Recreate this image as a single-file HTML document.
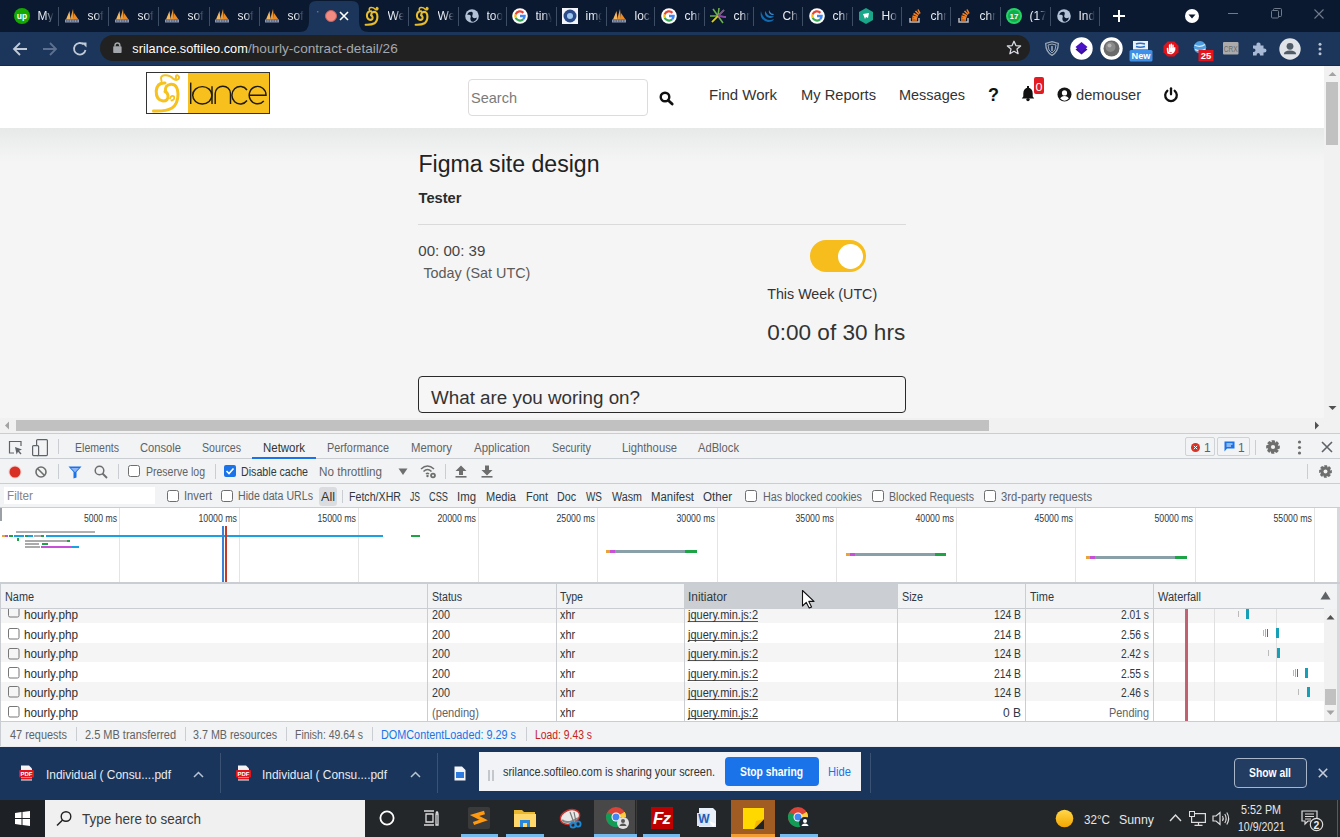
<!DOCTYPE html>
<html><head><meta charset="utf-8"><style>
*{box-sizing:border-box;margin:0;padding:0}
html,body{width:1340px;height:837px;overflow:hidden;background:#fff;font-family:"Liberation Sans",sans-serif}
.a{position:absolute}
.t{position:absolute;white-space:nowrap;line-height:1}
svg{position:absolute;overflow:visible}
</style></head><body>
<div class="a" style="left:0;top:0;width:1340px;height:32px;background:#0a1830"></div>
<div class="a" style="left:0;top:32px;width:1340px;height:34px;background:#1b365a"></div>
<div class="a" style="left:0;top:65px;width:1340px;height:1px;background:#142c4c"></div>
<svg style="left:299px;top:0" width="70" height="32"><path d="M0 32 Q10 32 10 22 L10 8 Q10 1 17 1 L53 1 Q60 1 60 8 L60 22 Q60 32 70 32 Z" fill="#1b365a"/></svg>
<div class="a" style="left:58px;top:7px;width:1px;height:19px;background:#3d4d63"></div>
<div class="a" style="left:108px;top:7px;width:1px;height:19px;background:#3d4d63"></div>
<div class="a" style="left:158px;top:7px;width:1px;height:19px;background:#3d4d63"></div>
<div class="a" style="left:209px;top:7px;width:1px;height:19px;background:#3d4d63"></div>
<div class="a" style="left:259px;top:7px;width:1px;height:19px;background:#3d4d63"></div>
<div class="a" style="left:408px;top:7px;width:1px;height:19px;background:#3d4d63"></div>
<div class="a" style="left:458px;top:7px;width:1px;height:19px;background:#3d4d63"></div>
<div class="a" style="left:506px;top:7px;width:1px;height:19px;background:#3d4d63"></div>
<div class="a" style="left:556px;top:7px;width:1px;height:19px;background:#3d4d63"></div>
<div class="a" style="left:606px;top:7px;width:1px;height:19px;background:#3d4d63"></div>
<div class="a" style="left:654px;top:7px;width:1px;height:19px;background:#3d4d63"></div>
<div class="a" style="left:704px;top:7px;width:1px;height:19px;background:#3d4d63"></div>
<div class="a" style="left:753px;top:7px;width:1px;height:19px;background:#3d4d63"></div>
<div class="a" style="left:802px;top:7px;width:1px;height:19px;background:#3d4d63"></div>
<div class="a" style="left:852px;top:7px;width:1px;height:19px;background:#3d4d63"></div>
<div class="a" style="left:901px;top:7px;width:1px;height:19px;background:#3d4d63"></div>
<div class="a" style="left:950px;top:7px;width:1px;height:19px;background:#3d4d63"></div>
<div class="a" style="left:1000px;top:7px;width:1px;height:19px;background:#3d4d63"></div>
<div class="a" style="left:1050px;top:7px;width:1px;height:19px;background:#3d4d63"></div>
<div class="a" style="left:1099px;top:7px;width:1px;height:19px;background:#3d4d63"></div>
<svg style="left:14px;top:8px" width="16" height="16"><circle cx="8" cy="8" r="8" fill="#14a800"/><text x="8" y="11" font-size="8.5" font-weight="bold" text-anchor="middle" fill="#fff" font-family="Liberation Sans">up</text></svg>
<div class="t" style="left:37.5px;top:10px;font-size:12px;color:#e8ecf2;width:16px;overflow:hidden;-webkit-mask-image:linear-gradient(90deg,#000 45%,transparent 100%)">My</div>
<svg style="left:64px;top:8px" width="16" height="16"><path d="M2 11.5 L5.5 3 L6.5 11.5Z" fill="#f4b860"/><path d="M6 11.5 L9 1 L10 11.5Z" fill="#e99a3a"/><path d="M9.5 11.5 L10 5 L14.5 11.5Z" fill="#f08a20"/><rect x="1" y="11.5" width="14" height="3" fill="#8e97b0"/><path d="M2 13 H14" stroke="#0a1830" stroke-width="0.6" stroke-dasharray="1.5 1"/></svg>
<div class="t" style="left:87.5px;top:10px;font-size:12px;color:#e8ecf2;width:16px;overflow:hidden;-webkit-mask-image:linear-gradient(90deg,#000 45%,transparent 100%)">soft</div>
<svg style="left:114px;top:8px" width="16" height="16"><path d="M2 11.5 L5.5 3 L6.5 11.5Z" fill="#f4b860"/><path d="M6 11.5 L9 1 L10 11.5Z" fill="#e99a3a"/><path d="M9.5 11.5 L10 5 L14.5 11.5Z" fill="#f08a20"/><rect x="1" y="11.5" width="14" height="3" fill="#8e97b0"/><path d="M2 13 H14" stroke="#0a1830" stroke-width="0.6" stroke-dasharray="1.5 1"/></svg>
<div class="t" style="left:137.5px;top:10px;font-size:12px;color:#e8ecf2;width:16px;overflow:hidden;-webkit-mask-image:linear-gradient(90deg,#000 45%,transparent 100%)">soft</div>
<svg style="left:164px;top:8px" width="16" height="16"><path d="M2 11.5 L5.5 3 L6.5 11.5Z" fill="#f4b860"/><path d="M6 11.5 L9 1 L10 11.5Z" fill="#e99a3a"/><path d="M9.5 11.5 L10 5 L14.5 11.5Z" fill="#f08a20"/><rect x="1" y="11.5" width="14" height="3" fill="#8e97b0"/><path d="M2 13 H14" stroke="#0a1830" stroke-width="0.6" stroke-dasharray="1.5 1"/></svg>
<div class="t" style="left:187.5px;top:10px;font-size:12px;color:#e8ecf2;width:16px;overflow:hidden;-webkit-mask-image:linear-gradient(90deg,#000 45%,transparent 100%)">soft</div>
<svg style="left:214px;top:8px" width="16" height="16"><path d="M2 11.5 L5.5 3 L6.5 11.5Z" fill="#f4b860"/><path d="M6 11.5 L9 1 L10 11.5Z" fill="#e99a3a"/><path d="M9.5 11.5 L10 5 L14.5 11.5Z" fill="#f08a20"/><rect x="1" y="11.5" width="14" height="3" fill="#8e97b0"/><path d="M2 13 H14" stroke="#0a1830" stroke-width="0.6" stroke-dasharray="1.5 1"/></svg>
<div class="t" style="left:237.5px;top:10px;font-size:12px;color:#e8ecf2;width:16px;overflow:hidden;-webkit-mask-image:linear-gradient(90deg,#000 45%,transparent 100%)">soft</div>
<svg style="left:264px;top:8px" width="16" height="16"><path d="M2 11.5 L5.5 3 L6.5 11.5Z" fill="#f4b860"/><path d="M6 11.5 L9 1 L10 11.5Z" fill="#e99a3a"/><path d="M9.5 11.5 L10 5 L14.5 11.5Z" fill="#f08a20"/><rect x="1" y="11.5" width="14" height="3" fill="#8e97b0"/><path d="M2 13 H14" stroke="#0a1830" stroke-width="0.6" stroke-dasharray="1.5 1"/></svg>
<div class="t" style="left:287.5px;top:10px;font-size:12px;color:#e8ecf2;width:16px;overflow:hidden;-webkit-mask-image:linear-gradient(90deg,#000 45%,transparent 100%)">soft</div>
<svg style="left:363px;top:6px" width="18" height="20"><g transform="scale(0.48) translate(-2,0)" fill="none" stroke="#e9bc2a" stroke-linecap="round"><path d="M15.5 9 Q13.5 3.5 19 3.2 Q24 3 27 6.5 Q30 9 32.5 7 Q34 4.5 31.5 3.3 Q29.5 3 30 6" stroke-width="3.2"/><path d="M19 11 Q11 10.5 10.2 19 Q10 28 17 29 Q22.5 29 22 23.5 Q21.5 20.5 19 19.5" stroke-width="4.4"/><path d="M19.5 19.5 Q18.5 13 25 12.3 Q31.8 12 32 22 Q32 32 26 36 Q20 39.5 7.5 39" stroke-width="4.4"/></g></svg>
<div class="t" style="left:387.5px;top:10px;font-size:12px;color:#e8ecf2;width:16px;overflow:hidden;-webkit-mask-image:linear-gradient(90deg,#000 45%,transparent 100%)">We</div>
<svg style="left:413px;top:6px" width="18" height="20"><g transform="scale(0.48) translate(-2,0)" fill="none" stroke="#e9bc2a" stroke-linecap="round"><path d="M15.5 9 Q13.5 3.5 19 3.2 Q24 3 27 6.5 Q30 9 32.5 7 Q34 4.5 31.5 3.3 Q29.5 3 30 6" stroke-width="3.2"/><path d="M19 11 Q11 10.5 10.2 19 Q10 28 17 29 Q22.5 29 22 23.5 Q21.5 20.5 19 19.5" stroke-width="4.4"/><path d="M19.5 19.5 Q18.5 13 25 12.3 Q31.8 12 32 22 Q32 32 26 36 Q20 39.5 7.5 39" stroke-width="4.4"/></g></svg>
<div class="t" style="left:437.5px;top:10px;font-size:12px;color:#e8ecf2;width:16px;overflow:hidden;-webkit-mask-image:linear-gradient(90deg,#000 45%,transparent 100%)">We</div>
<svg style="left:463.5px;top:8px" width="16" height="16"><circle cx="8" cy="8" r="6.8" fill="#b4c2d6"/><path d="M3.2 6.8 Q4.2 3.6 7.6 3.8 Q9.6 4.4 8.6 6.4 Q7.6 8.2 8.8 9.6 Q10.6 10.8 13 9.4 Q12.6 12.4 10 13.6 Q7.6 14.4 6.6 12.2 Q6 10.4 6.8 8.8 Q7.2 7.2 5.4 6.8 Q4.2 6.6 3.2 6.8Z" fill="#0a1830"/></svg>
<div class="t" style="left:486.5px;top:10px;font-size:12px;color:#e8ecf2;width:16px;overflow:hidden;-webkit-mask-image:linear-gradient(90deg,#000 45%,transparent 100%)">too</div>
<svg style="left:512px;top:8px" width="16" height="16"><circle cx="8" cy="8" r="7.8" fill="#fff"/><g fill="none" stroke-width="2.3"><path d="M8 8 H12.6 A4.6 4.6 0 0 1 11.25 11.25" stroke="#4285f4"/><path d="M11.25 11.25 A4.6 4.6 0 0 1 3.68 9.57" stroke="#34a853"/><path d="M3.68 9.57 A4.6 4.6 0 0 1 3.68 6.43" stroke="#fbbc05"/><path d="M3.68 6.43 A4.6 4.6 0 0 1 11.4 4.9" stroke="#ea4335"/></g></svg>
<div class="t" style="left:535.5px;top:10px;font-size:12px;color:#e8ecf2;width:16px;overflow:hidden;-webkit-mask-image:linear-gradient(90deg,#000 45%,transparent 100%)">tiny</div>
<svg style="left:562px;top:8px" width="16" height="16"><rect width="16" height="16" fill="#f2f4f8"/><circle cx="8" cy="8" r="6.5" fill="#2a4a8a"/><circle cx="8" cy="8" r="3" fill="#9ec7f0"/></svg>
<div class="t" style="left:585.5px;top:10px;font-size:12px;color:#e8ecf2;width:16px;overflow:hidden;-webkit-mask-image:linear-gradient(90deg,#000 45%,transparent 100%)">img</div>
<svg style="left:611px;top:8px" width="16" height="16"><path d="M2 11.5 L5.5 3 L6.5 11.5Z" fill="#f4b860"/><path d="M6 11.5 L9 1 L10 11.5Z" fill="#e99a3a"/><path d="M9.5 11.5 L10 5 L14.5 11.5Z" fill="#f08a20"/><rect x="1" y="11.5" width="14" height="3" fill="#8e97b0"/><path d="M2 13 H14" stroke="#0a1830" stroke-width="0.6" stroke-dasharray="1.5 1"/></svg>
<div class="t" style="left:634.5px;top:10px;font-size:12px;color:#e8ecf2;width:16px;overflow:hidden;-webkit-mask-image:linear-gradient(90deg,#000 45%,transparent 100%)">loca</div>
<svg style="left:661px;top:8px" width="16" height="16"><circle cx="8" cy="8" r="7.8" fill="#fff"/><g fill="none" stroke-width="2.3"><path d="M8 8 H12.6 A4.6 4.6 0 0 1 11.25 11.25" stroke="#4285f4"/><path d="M11.25 11.25 A4.6 4.6 0 0 1 3.68 9.57" stroke="#34a853"/><path d="M3.68 9.57 A4.6 4.6 0 0 1 3.68 6.43" stroke="#fbbc05"/><path d="M3.68 6.43 A4.6 4.6 0 0 1 11.4 4.9" stroke="#ea4335"/></g></svg>
<div class="t" style="left:684.5px;top:10px;font-size:12px;color:#e8ecf2;width:16px;overflow:hidden;-webkit-mask-image:linear-gradient(90deg,#000 45%,transparent 100%)">chr</div>
<svg style="left:710px;top:8px" width="16" height="16"><path d="M8 8 L3 1 M8 8 L9 0 M8 8 L14 2 M8 8 L16 9 M8 8 L13 15 M8 8 L2 14 M8 8 L0 8" stroke-width="1.6" stroke="#6ab04c"/><path d="M8 8 L14 2 M8 8 L16 9" stroke="#8e44ad" stroke-width="1.6"/><path d="M8 8 L2 14" stroke="#f1c40f" stroke-width="1.6"/></svg>
<div class="t" style="left:733.5px;top:10px;font-size:12px;color:#e8ecf2;width:16px;overflow:hidden;-webkit-mask-image:linear-gradient(90deg,#000 45%,transparent 100%)">chr</div>
<svg style="left:759px;top:8px" width="16" height="16"><path d="M2 3 Q0 12 9 14 Q14 14 15 11 Q8 14 4 8 Q2 5 2 3Z" fill="#1169ae"/><path d="M6 3 Q5 9 11 10 Q14 10 15 8 Q10 9 8 6 Q7 4 6 3Z" fill="#1b75bb"/><path d="M10 2 Q9 6 13 7 Q15 7 15 6 Q12 6 11 4Z" fill="#3a8fd1"/></svg>
<div class="t" style="left:782.5px;top:10px;font-size:12px;color:#e8ecf2;width:16px;overflow:hidden;-webkit-mask-image:linear-gradient(90deg,#000 45%,transparent 100%)">Cha</div>
<svg style="left:809px;top:8px" width="16" height="16"><circle cx="8" cy="8" r="7.8" fill="#fff"/><g fill="none" stroke-width="2.3"><path d="M8 8 H12.6 A4.6 4.6 0 0 1 11.25 11.25" stroke="#4285f4"/><path d="M11.25 11.25 A4.6 4.6 0 0 1 3.68 9.57" stroke="#34a853"/><path d="M3.68 9.57 A4.6 4.6 0 0 1 3.68 6.43" stroke="#fbbc05"/><path d="M3.68 6.43 A4.6 4.6 0 0 1 11.4 4.9" stroke="#ea4335"/></g></svg>
<div class="t" style="left:832.5px;top:10px;font-size:12px;color:#e8ecf2;width:16px;overflow:hidden;-webkit-mask-image:linear-gradient(90deg,#000 45%,transparent 100%)">chr</div>
<svg style="left:858px;top:8px" width="16" height="16"><path d="M8 0 L15 4 L15 12 L8 16 L1 12 L1 4Z" fill="#1aa688"/><path d="M5 6 L11 5 L10 10 L8 9 L7 11Z" fill="#fff"/></svg>
<div class="t" style="left:881.5px;top:10px;font-size:12px;color:#e8ecf2;width:16px;overflow:hidden;-webkit-mask-image:linear-gradient(90deg,#000 45%,transparent 100%)">Ho</div>
<svg style="left:907px;top:8px" width="16" height="16"><path d="M3 10 V14 H12 V10" stroke="#bcbbbb" stroke-width="1.5" fill="none"/><path d="M5 12 H10 M5 10 L10 10.5 M5.5 8 L10.5 9.5 M6.5 5.5 L11 8 M8.5 3 L12 6.5 M11 1.5 L13 5.5" stroke="#f48024" stroke-width="1.6"/></svg>
<div class="t" style="left:930.5px;top:10px;font-size:12px;color:#e8ecf2;width:16px;overflow:hidden;-webkit-mask-image:linear-gradient(90deg,#000 45%,transparent 100%)">chr</div>
<svg style="left:956px;top:8px" width="16" height="16"><path d="M3 10 V14 H12 V10" stroke="#bcbbbb" stroke-width="1.5" fill="none"/><path d="M5 12 H10 M5 10 L10 10.5 M5.5 8 L10.5 9.5 M6.5 5.5 L11 8 M8.5 3 L12 6.5 M11 1.5 L13 5.5" stroke="#f48024" stroke-width="1.6"/></svg>
<div class="t" style="left:979.5px;top:10px;font-size:12px;color:#e8ecf2;width:16px;overflow:hidden;-webkit-mask-image:linear-gradient(90deg,#000 45%,transparent 100%)">chr</div>
<svg style="left:1006px;top:8px" width="16" height="16"><circle cx="8" cy="8" r="8" fill="#25d366"/><circle cx="8" cy="8" r="6" fill="#0fae4a"/><text x="8" y="11" font-size="8" font-weight="bold" text-anchor="middle" fill="#fff" font-family="Liberation Sans">17</text></svg>
<div class="t" style="left:1029.5px;top:10px;font-size:12px;color:#e8ecf2;width:16px;overflow:hidden;-webkit-mask-image:linear-gradient(90deg,#000 45%,transparent 100%)">(17)</div>
<svg style="left:1055.5px;top:8px" width="16" height="16"><circle cx="8" cy="8" r="6.8" fill="#b4c2d6"/><path d="M3.2 6.8 Q4.2 3.6 7.6 3.8 Q9.6 4.4 8.6 6.4 Q7.6 8.2 8.8 9.6 Q10.6 10.8 13 9.4 Q12.6 12.4 10 13.6 Q7.6 14.4 6.6 12.2 Q6 10.4 6.8 8.8 Q7.2 7.2 5.4 6.8 Q4.2 6.6 3.2 6.8Z" fill="#0a1830"/></svg>
<div class="t" style="left:1078.5px;top:10px;font-size:12px;color:#e8ecf2;width:16px;overflow:hidden;-webkit-mask-image:linear-gradient(90deg,#000 45%,transparent 100%)">Ind</div>
<div class="t" style="left:317px;top:10px;font-size:8px;color:#8ab4f8">'</div>
<svg style="left:324px;top:9px" width="14" height="14"><circle cx="7" cy="7" r="5.5" fill="#f28b82" stroke="#c5645e" stroke-width="1"/></svg>
<svg style="left:339px;top:11px" width="10" height="10"><path d="M1 1 L9 9 M9 1 L1 9" stroke="#fff" stroke-width="1.6"/></svg>
<svg style="left:1112px;top:9px" width="14" height="14"><path d="M7 1 V13 M1 7 H13" stroke="#fff" stroke-width="2"/></svg>
<svg style="left:1184px;top:8px" width="16" height="16"><circle cx="8" cy="8" r="7" fill="#fff"/><path d="M4.5 6.5 L11.5 6.5 L8 10.5Z" fill="#0a1830"/></svg>
<div class="a" style="left:1228px;top:13px;width:10px;height:1px;background:#6f7a8a"></div>
<svg style="left:1271px;top:8px" width="11" height="11"><rect x="0.5" y="2.5" width="7" height="7.5" rx="1" fill="none" stroke="#6f7a8a"/><path d="M2.5 2.5 V1.5 Q2.5 0.5 3.5 0.5 H9.5 Q10.5 0.5 10.5 1.5 V7.5 Q10.5 8.5 9.5 8.5 H7.5" fill="none" stroke="#6f7a8a"/></svg>
<svg style="left:1313.5px;top:8.5px" width="10" height="10"><path d="M0.5 0.5 L9.5 9.5 M9.5 0.5 L0.5 9.5" stroke="#6f7a8a" stroke-width="1.1"/></svg>
<svg style="left:12px;top:41px" width="16" height="16"><path d="M15 8 H2 M8 2 L2 8 L8 14" stroke="#c0cad8" stroke-width="1.8" fill="none"/></svg>
<svg style="left:42px;top:41px" width="16" height="16"><path d="M1 8 H14 M8 2 L14 8 L8 14" stroke="#5d7090" stroke-width="1.8" fill="none"/></svg>
<svg style="left:72px;top:41px" width="16" height="16"><path d="M13.5 9 A5.8 5.8 0 1 1 11.6 3.4" stroke="#c0cad8" stroke-width="1.8" fill="none"/><path d="M9.5 1.5 L14.5 1.5 L14.5 6.5Z" fill="#c0cad8"/></svg>
<div class="a" style="left:100px;top:35px;width:930px;height:26px;border-radius:13px;background:#212121"></div>
<svg style="left:113px;top:42px" width="9" height="12"><rect x="0.2" y="4.2" width="8.4" height="6.8" rx="0.8" fill="#a3a6aa"/><path d="M2 4.5 V3.3 A2.4 2.4 0 0 1 6.8 3.3 V4.5" stroke="#a3a6aa" stroke-width="1.5" fill="none"/></svg>
<svg style="left:1006px;top:40px" width="16" height="16"><path d="M8 1.3 L9.9 5.6 L14.6 6 L11 9.1 L12.1 13.7 L8 11.3 L3.9 13.7 L5 9.1 L1.4 6 L6.1 5.6Z" stroke="#d8dce2" stroke-width="1.3" fill="none" stroke-linejoin="round"/></svg>
<svg style="left:1045px;top:41px" width="14" height="15"><path d="M7 0.7 L13.3 2.5 Q13.3 11 7 14.3 Q0.7 11 0.7 2.5Z" fill="none" stroke="#9aa7b8" stroke-width="1.3"/><path d="M7 3 L11 4 Q11 10 7 12 Q3 10 3 4Z" fill="none" stroke="#9aa7b8" stroke-width="1"/><path d="M6.2 5 H7.8 V10 H6.2Z" fill="#9aa7b8"/></svg>
<svg style="left:1070px;top:37px" width="23" height="23"><circle cx="11.5" cy="11.5" r="11.2" fill="#fff"/><path d="M11.5 5 L17.5 10 L11.5 15 L5.5 10Z" fill="#4a12c8"/><path d="M5.5 12.5 L11.5 17.5 L17.5 12.5 L15.5 11 L11.5 14.5 L7.5 11Z" fill="#3a0ea0"/></svg>
<svg style="left:1100px;top:37px" width="23" height="23"><circle cx="11.5" cy="11.5" r="11.2" fill="#fff"/><circle cx="11.5" cy="11.5" r="8" fill="#6a6a6a"/><circle cx="10.5" cy="10" r="5" fill="#8a8a8a"/><circle cx="9.5" cy="8.5" r="2" fill="#b5b5b5"/></svg>
<svg style="left:1129px;top:41px" width="24" height="21"><rect x="4" y="0" width="15" height="8.5" fill="#e9f1fb"/><path d="M7 3 Q11 1.5 16 3 M7 5.5 Q11 7 16 5.5" stroke="#2a6fc9" stroke-width="1.6" fill="none"/><rect x="0.5" y="9" width="23" height="11.5" rx="1.5" fill="#3f8fe6"/><text x="12" y="18.3" font-size="9.5" font-weight="bold" text-anchor="middle" fill="#fff" font-family="Liberation Sans" textLength="19" lengthAdjust="spacingAndGlyphs">New</text></svg>
<svg style="left:1163px;top:40.5px" width="16" height="16"><path d="M4.7 0.5 H11.3 L15.5 4.7 V11.3 L11.3 15.5 H4.7 L0.5 11.3 V4.7Z" fill="#e0131b"/><path d="M5 12 Q4.5 9 4.5 7.5 M6.6 10 V4 M8.3 10 V3.3 M10 10 V4.3 M11.6 9 V6.3 Q11.8 11.5 8.3 12.5 Q6 12.5 5 11" stroke="#fff" stroke-width="1.5" fill="none" stroke-linecap="round"/><path d="M6 7 H11 V11 H6Z" fill="#fff"/></svg>
<svg style="left:1193px;top:41px" width="22" height="21"><circle cx="7" cy="6.3" r="6.2" fill="#4e9ee0"/><path d="M1.5 4 Q7 7 12 3.5 M2 8.5 Q7 11 12.5 8" stroke="#d9ecfb" stroke-width="1.3" fill="none"/><rect x="5.5" y="9" width="15" height="11.3" fill="#e3141b"/><text x="13" y="18.3" font-size="9.5" font-weight="bold" text-anchor="middle" fill="#fff" font-family="Liberation Sans">25</text></svg>
<svg style="left:1222.5px;top:42px" width="16" height="13"><rect x="0" y="0" width="15.5" height="12.5" rx="1" fill="#ababab"/><text x="7.75" y="10" font-size="8.3" text-anchor="middle" fill="#6d6d6d" font-family="Liberation Sans" textLength="14" lengthAdjust="spacingAndGlyphs">CRX</text></svg>
<svg style="left:1252px;top:41.5px" width="15" height="14"><path d="M1 3.5 H4.5 Q4 0.5 6.5 0.5 Q9 0.5 8.5 3.5 H11.5 V6.5 Q14.5 6 14.5 8.5 Q14.5 11 11.5 10.5 V13.5 H8 Q8.3 11 6.3 11 Q4.3 11 4.6 13.5 H1 V10 Q3.5 10.3 3.5 8.3 Q3.5 6.3 1 6.6Z" fill="#a8bad6"/></svg>
<svg style="left:1279px;top:37.5px" width="22" height="22"><circle cx="11" cy="11" r="10.7" fill="#e0e3e7"/><circle cx="11" cy="8.3" r="3.4" fill="#505b68"/><path d="M4.8 16.2 Q5.2 12.6 11 12.6 Q16.8 12.6 17.2 16.2 Z" fill="#505b68"/></svg>
<svg style="left:1318px;top:41.5px" width="4" height="14"><circle cx="2" cy="2.2" r="1.5" fill="#b8c3d3"/><circle cx="2" cy="7" r="1.5" fill="#b8c3d3"/><circle cx="2" cy="11.8" r="1.5" fill="#b8c3d3"/></svg>
<div class="a" style="left:0;top:66px;width:1324px;height:62px;background:#fff"></div>
<div class="a" style="left:0;top:128px;width:1324px;height:290px;background:#f5f5f5"></div>
<div class="a" style="left:0;top:128px;width:1324px;height:34px;background:linear-gradient(#e7e9e9,#f5f5f5)"></div>
<div class="a" style="left:146px;top:72px;width:124px;height:42px;border:1px solid #333;background:#f7c01c"></div>
<div class="a" style="left:147px;top:73px;width:41px;height:40px;background:#fff"></div>
<svg style="left:146px;top:72px" width="42" height="42"><g fill="none" stroke="#f5c21f" stroke-linecap="round"><path d="M15.5 9 Q13.5 3.5 19 3.2 Q24 3 27 6.5 Q30 9 32.5 7 Q34 4.5 31.5 3.3 Q29.5 3 30 6" stroke-width="2"/><path d="M19 11 Q11 10.5 10.2 19 Q10 28 17 29 Q22.5 29 22 23.5 Q21.5 20.5 19 19.5" stroke-width="3"/><path d="M19.5 19.5 Q18.5 13 25 12.3 Q31.8 12 32 22 Q32 32 26 36 Q20 39.5 7.5 39" stroke-width="3"/><path d="M24 26.5 Q25.5 22.5 28 24.5 Q29 28 25.5 28.5" stroke-width="1.8"/></g></svg>
<svg style="left:146px;top:72px" width="124" height="42"><g fill="none" stroke="#1e1a10" stroke-width="1.45"><path d="M44.7 10.6 V32"/><ellipse cx="56.3" cy="23.3" rx="9.6" ry="8.7"/><path d="M66 14.3 V32"/><path d="M69.2 32 V21.5 A7.6 7.3 0 0 1 84.5 21.5 V32"/><path d="M101 18 A8.4 8.7 0 1 0 101 28.5"/><path d="M103.4 23.3 H120 A8.4 8.7 0 1 0 117.8 29"/></g></svg>
<div class="a" style="left:468px;top:79px;width:180px;height:37px;border:1px solid #dcdcdc;border-radius:4px;background:#fff"></div>
<svg style="left:659px;top:91px" width="15" height="14"><circle cx="6" cy="6" r="4.3" stroke="#111" stroke-width="2.4" fill="none"/><path d="M9.4 9.4 L13.2 13" stroke="#111" stroke-width="2.8" stroke-linecap="round"/></svg>
<svg style="left:1021px;top:86px" width="14" height="16"><path d="M7 1.5 Q2.3 2.3 2.3 7.5 V10.5 L0.8 12.6 H13.2 L11.7 10.5 V7.5 Q11.7 2.3 7 1.5Z" fill="#111"/><circle cx="7" cy="13.6" r="1.7" fill="#111"/><rect x="6" y="0" width="2" height="3" fill="#111"/></svg>
<div class="a" style="left:1034px;top:77px;width:10px;height:17px;background:#e31b23;border-radius:2px"></div>
<svg style="left:1057px;top:87px" width="15" height="15"><circle cx="7.5" cy="7.5" r="7" fill="#151515"/><circle cx="7.5" cy="5.9" r="2.6" fill="#fff"/><path d="M3.2 11.6 Q4.3 8.9 7.5 8.9 Q10.7 8.9 11.8 11.6 Q10 13.7 7.5 13.7 Q5 13.7 3.2 11.6Z" fill="#fff"/></svg>
<svg style="left:1163px;top:87px" width="16" height="15"><path d="M4.3 3.8 A5.8 5.8 0 1 0 11.7 3.8" stroke="#111" stroke-width="2.3" fill="none" stroke-linecap="round"/><path d="M8 1.3 V7.3" stroke="#111" stroke-width="2.3" stroke-linecap="round"/></svg>
<div class="a" style="left:418px;top:224px;width:488px;height:1px;background:#dadada"></div>
<div class="a" style="left:810px;top:240px;width:56px;height:32px;border-radius:16px;background:#f6bd1c"></div>
<div class="a" style="left:838px;top:243.5px;width:25px;height:25px;border-radius:13px;background:#fff"></div>
<div class="a" style="left:418px;top:376px;width:488px;height:37px;border:1.5px solid #2a2a2a;border-radius:4px;background:#f6f6f6"></div>
<div class="a" style="left:1324px;top:66px;width:16px;height:352px;background:#f1f1f1"></div>
<div class="a" style="left:1326px;top:82px;width:12px;height:63px;background:#c1c1c1"></div>
<svg style="left:1327px;top:70px" width="11" height="8"><path d="M1.5 6 L5.5 2 L9.5 6Z" fill="#a3a3a3"/></svg>
<svg style="left:1327px;top:404px" width="11" height="8"><path d="M1.5 2 L5.5 6 L9.5 2Z" fill="#505050"/></svg>
<div class="a" style="left:0;top:418px;width:1340px;height:15px;background:#f1f1f1"></div>
<div class="a" style="left:16px;top:420px;width:973px;height:11px;background:#c1c1c1"></div>
<svg style="left:3px;top:420px" width="8" height="11"><path d="M6 1.5 L2 5.5 L6 9.5Z" fill="#a3a3a3"/></svg>
<svg style="left:1313px;top:420px" width="8" height="11"><path d="M2 1.5 L6 5.5 L2 9.5Z" fill="#505050"/></svg>
<div class="a" style="left:0;top:433px;width:1340px;height:313px;background:#f1f3f4"></div>
<div class="a" style="left:0;top:433px;width:1340px;height:1px;background:#cacdd1"></div>
<div class="a" style="left:0;top:458px;width:1340px;height:1px;background:#cacdd1"></div>
<div class="a" style="left:0;top:483px;width:1340px;height:1px;background:#cacdd1"></div>
<div class="a" style="left:0;top:507px;width:1340px;height:1px;background:#cacdd1"></div>
<svg style="left:8px;top:440px" width="16" height="16"><path d="M6 13 H1.5 V1.5 H13 V6" fill="none" stroke="#5f6368" stroke-width="1.2"/><path d="M7 7 L14 9.5 L11 10.8 L13.5 13.5 L12.5 14.5 L10 11.8 L8.6 14.6Z" fill="#5f6368"/></svg>
<svg style="left:32px;top:439px" width="16" height="18"><rect x="4.6" y="0.6" width="10.8" height="16" rx="1" fill="none" stroke="#5f6368" stroke-width="1.2"/><rect x="0.6" y="6.6" width="6" height="10" rx="1" fill="#f1f3f4" stroke="#5f6368" stroke-width="1.2"/></svg>
<div class="a" style="left:58px;top:439px;width:1px;height:15px;background:#cacdd1"></div>
<div class="a" style="left:252px;top:457px;width:64px;height:2px;background:#1a73e8"></div>
<div class="a" style="left:1185px;top:437px;width:30px;height:19px;border:1px solid #cfd2d6;border-radius:2px"></div>
<svg style="left:1191px;top:443px" width="9" height="9"><circle cx="4.5" cy="4.5" r="4.5" fill="#d93025"/><path d="M2.8 2.8 L6.2 6.2 M6.2 2.8 L2.8 6.2" stroke="#fff" stroke-width="1"/></svg>
<div class="a" style="left:1217px;top:437px;width:33px;height:19px;border:1px solid #cfd2d6;border-radius:2px"></div>
<svg style="left:1224px;top:441px" width="11" height="11"><path d="M0.5 0.5 H10.5 V7.5 H3 L0.5 10.5Z" fill="#1a73e8"/><path d="M2.5 3 H8.5 M2.5 5 H7" stroke="#fff" stroke-width="1"/></svg>
<div class="a" style="left:1255px;top:440px;width:1px;height:15px;background:#cacdd1"></div>
<svg style="left:1265px;top:439px" width="16" height="16"><path d="M14.83 6.47 L14.83 9.53 L12.42 10.42 L12.27 10.68 L13.91 11.75 L11.75 13.91 L9.42 12.84 L9.13 12.91 L9.53 14.83 L6.47 14.83 L5.58 12.42 L5.32 12.27 L4.25 13.91 L2.09 11.75 L3.16 9.42 L3.09 9.13 L1.17 9.53 L1.17 6.47 L3.58 5.58 L3.73 5.32 L2.09 4.25 L4.25 2.09 L6.58 3.16 L6.87 3.09 L6.47 1.17 L9.53 1.17 L10.42 3.58 L10.68 3.73 L11.75 2.09 L13.91 4.25 L12.84 6.58 L12.91 6.87Z" fill="#6e6e6e"/><circle cx="8" cy="8" r="2.1" fill="#f1f3f4"/></svg>
<svg style="left:1297px;top:440px" width="5" height="15"><circle cx="2.5" cy="2" r="1.6" fill="#6e6e6e"/><circle cx="2.5" cy="7.5" r="1.6" fill="#6e6e6e"/><circle cx="2.5" cy="13" r="1.6" fill="#6e6e6e"/></svg>
<svg style="left:1321px;top:441px" width="12" height="12"><path d="M1 1 L11 11 M11 1 L1 11" stroke="#5f6368" stroke-width="1.6"/></svg>
<svg style="left:8px;top:465px" width="14" height="14"><circle cx="7" cy="7" r="6.5" fill="#f5b5b0" opacity="0.6"/><circle cx="7" cy="7" r="5.5" fill="#d93025"/></svg>
<svg style="left:35px;top:466px" width="12" height="12"><circle cx="6" cy="6" r="5" fill="none" stroke="#6e6e6e" stroke-width="1.6"/><path d="M2.5 2.5 L9.5 9.5" stroke="#6e6e6e" stroke-width="1.6"/></svg>
<div class="a" style="left:58px;top:464px;width:1px;height:15px;background:#cacdd1"></div>
<svg style="left:68px;top:466px" width="14" height="13"><path d="M0.5 0.5 H13.5 L8.5 6 V11.5 L5.5 12.5 V6Z" fill="#1a73e8"/><path d="M3 2 H11 L7 6.2Z" fill="#8ab4f8"/></svg>
<svg style="left:94px;top:465px" width="14" height="14"><circle cx="5.5" cy="5.5" r="4.3" fill="none" stroke="#6e6e6e" stroke-width="1.5"/><path d="M8.5 8.5 L13 13" stroke="#6e6e6e" stroke-width="1.8"/></svg>
<div class="a" style="left:118px;top:464px;width:1px;height:15px;background:#cacdd1"></div>
<svg style="left:128px;top:465px" width="12" height="12"><rect x="0.5" y="0.5" width="11" height="11" rx="2" fill="#fff" stroke="#6e6e6e" stroke-width="1"/></svg>
<div class="a" style="left:215px;top:464px;width:1px;height:15px;background:#cacdd1"></div>
<svg style="left:224px;top:465px" width="12" height="12"><rect x="0" y="0" width="12" height="12" rx="2" fill="#1a73e8"/><path d="M2.5 6 L5 8.5 L9.5 3.5" stroke="#fff" stroke-width="1.6" fill="none"/></svg>
<svg style="left:398px;top:468px" width="10" height="8"><path d="M0.5 0.5 H9.5 L5 7Z" fill="#6e6e6e"/></svg>
<svg style="left:420px;top:464px" width="17" height="15"><path d="M1 5 Q7.5 -1 14 5 M3.5 7.5 Q7.5 3.5 11.5 7.5 M6 10 Q7.5 8.5 9 10" stroke="#6e6e6e" stroke-width="1.5" fill="none"/><circle cx="7.5" cy="12" r="1.2" fill="#6e6e6e"/><circle cx="13" cy="11.5" r="2.8" fill="#6e6e6e"/><circle cx="13" cy="11.5" r="1" fill="#f1f3f4"/></svg>
<div class="a" style="left:445px;top:464px;width:1px;height:15px;background:#cacdd1"></div>
<svg style="left:455px;top:465px" width="12" height="13"><path d="M6 0.5 L11.5 6 H8 V10 H4 V6 H0.5Z" fill="#6e6e6e"/><rect x="0.5" y="11" width="11" height="1.6" fill="#6e6e6e"/></svg>
<svg style="left:481px;top:465px" width="12" height="13"><path d="M6 10.5 L11.5 5 H8 V0.5 H4 V5 H0.5Z" fill="#6e6e6e"/><rect x="0.5" y="11" width="11" height="1.6" fill="#6e6e6e"/></svg>
<div class="a" style="left:1307px;top:464px;width:1px;height:15px;background:#cacdd1"></div>
<svg style="left:1317.5px;top:463.5px" width="15.0" height="15.0"><path d="M13.84 6.08 L13.84 8.92 L11.61 9.74 L11.47 9.99 L12.99 10.98 L10.98 12.99 L8.82 11.99 L8.55 12.06 L8.92 13.84 L6.08 13.84 L5.26 11.61 L5.01 11.47 L4.02 12.99 L2.01 10.98 L3.01 8.82 L2.94 8.55 L1.16 8.92 L1.16 6.08 L3.39 5.26 L3.53 5.01 L2.01 4.02 L4.02 2.01 L6.18 3.01 L6.45 2.94 L6.08 1.16 L8.92 1.16 L9.74 3.39 L9.99 3.53 L10.98 2.01 L12.99 4.02 L11.99 6.18 L12.06 6.45Z" fill="#6e6e6e"/><circle cx="7.5" cy="7.5" r="1.95" fill="#f1f3f4"/></svg>
<div class="a" style="left:4px;top:487px;width:151px;height:17px;background:#fff"></div>
<svg style="left:167px;top:490px" width="12" height="12"><rect x="0.5" y="0.5" width="11" height="11" rx="2" fill="#fff" stroke="#6e6e6e" stroke-width="1"/></svg>
<svg style="left:221px;top:490px" width="12" height="12"><rect x="0.5" y="0.5" width="11" height="11" rx="2" fill="#fff" stroke="#6e6e6e" stroke-width="1"/></svg>
<div class="a" style="left:319px;top:487px;width:18px;height:19px;background:#dadce0;border-radius:3px"></div>
<div class="a" style="left:342px;top:490px;width:1px;height:13px;background:#cacdd1"></div>
<svg style="left:745px;top:490px" width="12" height="12"><rect x="0.5" y="0.5" width="11" height="11" rx="2" fill="#fff" stroke="#6e6e6e" stroke-width="1"/></svg>
<svg style="left:872px;top:490px" width="12" height="12"><rect x="0.5" y="0.5" width="11" height="11" rx="2" fill="#fff" stroke="#6e6e6e" stroke-width="1"/></svg>
<svg style="left:984px;top:490px" width="12" height="12"><rect x="0.5" y="0.5" width="11" height="11" rx="2" fill="#fff" stroke="#6e6e6e" stroke-width="1"/></svg>
<div class="a" style="left:0;top:508px;width:1337px;height:75px;background:#fff"></div>
<div class="a" style="left:0;top:508px;width:2px;height:13px;background:#9aa0a6"></div>
<div class="a" style="left:119px;top:508px;width:1px;height:75px;background:#e4e4e4"></div>
<div class="a" style="left:239px;top:508px;width:1px;height:75px;background:#e4e4e4"></div>
<div class="a" style="left:358px;top:508px;width:1px;height:75px;background:#e4e4e4"></div>
<div class="a" style="left:478px;top:508px;width:1px;height:75px;background:#e4e4e4"></div>
<div class="a" style="left:597px;top:508px;width:1px;height:75px;background:#e4e4e4"></div>
<div class="a" style="left:717px;top:508px;width:1px;height:75px;background:#e4e4e4"></div>
<div class="a" style="left:836px;top:508px;width:1px;height:75px;background:#e4e4e4"></div>
<div class="a" style="left:956px;top:508px;width:1px;height:75px;background:#e4e4e4"></div>
<div class="a" style="left:1075px;top:508px;width:1px;height:75px;background:#e4e4e4"></div>
<div class="a" style="left:1195px;top:508px;width:1px;height:75px;background:#e4e4e4"></div>
<div class="a" style="left:1314px;top:508px;width:1px;height:75px;background:#e4e4e4"></div>
<div class="a" style="left:1337px;top:508px;width:3px;height:75px;background:#d6d8db"></div>
<div class="a" style="left:2px;top:534.5px;width:3px;height:2.5px;background:#e8a33d"></div>
<div class="a" style="left:5px;top:534.5px;width:3px;height:2.5px;background:#c84fd8"></div>
<div class="a" style="left:9px;top:534.5px;width:4px;height:2.5px;background:#1ea446"></div>
<div class="a" style="left:14px;top:534.5px;width:10px;height:2.5px;background:#1ba1e2"></div>
<div class="a" style="left:25px;top:534.5px;width:3px;height:2.5px;background:#1ea446"></div>
<div class="a" style="left:28px;top:534.5px;width:5px;height:2.5px;background:#1ba1e2"></div>
<div class="a" style="left:34px;top:534.5px;width:7px;height:2.5px;background:#aaaaaa"></div>
<div class="a" style="left:41px;top:534.5px;width:3px;height:2.5px;background:#1ea446"></div>
<div class="a" style="left:46px;top:534.5px;width:337px;height:2.5px;background:#1ba1e2"></div>
<div class="a" style="left:411px;top:534.5px;width:9px;height:2.5px;background:#1ea446"></div>
<div class="a" style="left:16px;top:531px;width:79px;height:1.5px;background:#b0b0b0"></div>
<div class="a" style="left:17px;top:538px;width:2px;height:3px;background:#1ea446"></div>
<div class="a" style="left:25px;top:540px;width:42px;height:2px;background:#aaaaaa"></div>
<div class="a" style="left:67px;top:540px;width:3px;height:2px;background:#1ea446"></div>
<div class="a" style="left:25px;top:543px;width:14px;height:2px;background:#aaaaaa"></div>
<div class="a" style="left:42px;top:543px;width:6px;height:2px;background:#1ea446"></div>
<div class="a" style="left:25px;top:546px;width:15px;height:2px;background:#aaaaaa"></div>
<div class="a" style="left:41px;top:546px;width:31px;height:2px;background:#c84fd8"></div>
<div class="a" style="left:72px;top:546px;width:7px;height:2px;background:#1ba1e2"></div>
<div class="a" style="left:606px;top:550px;width:4px;height:3px;background:#e8a33d"></div>
<div class="a" style="left:610px;top:550px;width:5px;height:3px;background:#c84fd8"></div>
<div class="a" style="left:615px;top:550px;width:70px;height:3px;background:#8aa0a8"></div>
<div class="a" style="left:685px;top:550px;width:12px;height:3px;background:#1ea446"></div>
<div class="a" style="left:846px;top:553px;width:4px;height:3px;background:#e8a33d"></div>
<div class="a" style="left:850px;top:553px;width:5px;height:3px;background:#c84fd8"></div>
<div class="a" style="left:855px;top:553px;width:80px;height:3px;background:#8aa0a8"></div>
<div class="a" style="left:935px;top:553px;width:11px;height:3px;background:#1ea446"></div>
<div class="a" style="left:1086px;top:556px;width:4px;height:3px;background:#e8a33d"></div>
<div class="a" style="left:1090px;top:556px;width:5px;height:3px;background:#c84fd8"></div>
<div class="a" style="left:1095px;top:556px;width:80px;height:3px;background:#8aa0a8"></div>
<div class="a" style="left:1175px;top:556px;width:12px;height:3px;background:#1ea446"></div>
<div class="a" style="left:222px;top:526px;width:1.5px;height:57px;background:#3b82d6"></div>
<div class="a" style="left:225px;top:526px;width:1.5px;height:57px;background:#c53929"></div>
<div class="a" style="left:0;top:582px;width:1340px;height:2px;background:#cacdd1"></div>
<div class="a" style="left:684px;top:584px;width:213px;height:24px;background:#cbced2"></div>
<div class="a" style="left:0;top:608px;width:1324px;height:1px;background:#cacdd1"></div>
<svg style="left:1320px;top:591px" width="11" height="9"><path d="M0.5 8.5 L5.5 0.5 L10.5 8.5Z" fill="#5f6368"/></svg>
<div class="a" style="left:0;top:609px;width:1324px;height:14px;background:#f5f5f5"></div>
<div class="a" style="left:0;top:623px;width:1324px;height:20px;background:#fff"></div>
<div class="a" style="left:0;top:643px;width:1324px;height:19px;background:#f5f5f5"></div>
<div class="a" style="left:0;top:662px;width:1324px;height:20px;background:#fff"></div>
<div class="a" style="left:0;top:682px;width:1324px;height:19px;background:#f5f5f5"></div>
<div class="a" style="left:0;top:701px;width:1324px;height:20px;background:#fff"></div>
<div class="a" style="left:0;top:721px;width:1340px;height:1px;background:#cacdd1"></div>
<div class="a" style="left:427px;top:584px;width:1px;height:137px;background:#cacdd1"></div>
<div class="a" style="left:556px;top:584px;width:1px;height:137px;background:#cacdd1"></div>
<div class="a" style="left:684px;top:584px;width:1px;height:137px;background:#cacdd1"></div>
<div class="a" style="left:897px;top:584px;width:1px;height:137px;background:#cacdd1"></div>
<div class="a" style="left:1025px;top:584px;width:1px;height:137px;background:#cacdd1"></div>
<div class="a" style="left:1153px;top:584px;width:1px;height:137px;background:#cacdd1"></div>
<div class="a" style="left:0;top:584px;width:1px;height:162px;background:#cacdd1"></div>
<div class="a" style="left:8px;top:609px;width:12px;height:12px;overflow:hidden"><svg style="left:0;top:-3px" width="12" height="12"><rect x="0.5" y="0.5" width="10.5" height="10.5" rx="1.5" fill="none" stroke="#777" stroke-width="1"/></svg></div>
<div class="a" style="left:688px;top:621px;width:70px;height:1px;background:#555"></div>
<svg style="left:8px;top:628px" width="12" height="12"><rect x="0.5" y="0.5" width="10.5" height="10.5" rx="1.5" fill="none" stroke="#777" stroke-width="1"/></svg>
<div class="a" style="left:688px;top:640px;width:70px;height:1px;background:#555"></div>
<svg style="left:8px;top:648px" width="12" height="12"><rect x="0.5" y="0.5" width="10.5" height="10.5" rx="1.5" fill="none" stroke="#777" stroke-width="1"/></svg>
<div class="a" style="left:688px;top:660px;width:70px;height:1px;background:#555"></div>
<svg style="left:8px;top:667px" width="12" height="12"><rect x="0.5" y="0.5" width="10.5" height="10.5" rx="1.5" fill="none" stroke="#777" stroke-width="1"/></svg>
<div class="a" style="left:688px;top:680px;width:70px;height:1px;background:#555"></div>
<svg style="left:8px;top:686px" width="12" height="12"><rect x="0.5" y="0.5" width="10.5" height="10.5" rx="1.5" fill="none" stroke="#777" stroke-width="1"/></svg>
<div class="a" style="left:688px;top:699px;width:70px;height:1px;background:#555"></div>
<svg style="left:8px;top:706px" width="12" height="12"><rect x="0.5" y="0.5" width="10.5" height="10.5" rx="1.5" fill="none" stroke="#777" stroke-width="1"/></svg>
<div class="a" style="left:688px;top:718px;width:70px;height:1px;background:#555"></div>
<div class="a" style="left:1214px;top:609px;width:1px;height:112px;background:#e0e0e0"></div>
<div class="a" style="left:1276px;top:609px;width:1px;height:112px;background:#e0e0e0"></div>
<div class="a" style="left:1185px;top:609px;width:1px;height:112px;background:#4a8de0"></div>
<div class="a" style="left:1186px;top:609px;width:2px;height:112px;background:#c06070"></div>
<div class="a" style="left:1238px;top:611px;width:1px;height:6px;background:#bbb"></div>
<div class="a" style="left:1246px;top:609px;width:3px;height:10px;background:#16a0b8"></div>
<div class="a" style="left:1263px;top:630px;width:1px;height:6px;background:#bbb"></div>
<div class="a" style="left:1265px;top:629px;width:1px;height:8px;background:#e5a33a"></div>
<div class="a" style="left:1267px;top:629px;width:1px;height:8px;background:#9b3fb5"></div>
<div class="a" style="left:1276px;top:628px;width:3px;height:10px;background:#16a0b8"></div>
<div class="a" style="left:1268px;top:650px;width:1px;height:6px;background:#bbb"></div>
<div class="a" style="left:1277px;top:648px;width:3px;height:10px;background:#16a0b8"></div>
<div class="a" style="left:1293px;top:670px;width:1px;height:6px;background:#bbb"></div>
<div class="a" style="left:1295px;top:669px;width:1px;height:8px;background:#e5a33a"></div>
<div class="a" style="left:1297px;top:669px;width:1px;height:8px;background:#9b3fb5"></div>
<div class="a" style="left:1305px;top:668px;width:3px;height:10px;background:#16a0b8"></div>
<div class="a" style="left:1298px;top:689px;width:1px;height:6px;background:#bbb"></div>
<div class="a" style="left:1307px;top:687px;width:3px;height:10px;background:#16a0b8"></div>
<div class="a" style="left:1324px;top:609px;width:13px;height:112px;background:#f1f1f1"></div>
<svg style="left:1326px;top:614px" width="9" height="6"><path d="M0.5 5.5 L4.5 1 L8.5 5.5Z" fill="#505050"/></svg>
<div class="a" style="left:1325px;top:689px;width:11px;height:16px;background:#c1c1c1"></div>
<svg style="left:1326px;top:710px" width="9" height="6"><path d="M0.5 0.5 L4.5 5 L8.5 0.5Z" fill="#a3a3a3"/></svg>
<div class="a" style="left:1337px;top:584px;width:3px;height:137px;background:#d6d8db"></div>
<div class="a" style="left:76px;top:727px;width:1px;height:14px;background:#cacdd1"></div>
<div class="a" style="left:185px;top:727px;width:1px;height:14px;background:#cacdd1"></div>
<div class="a" style="left:286px;top:727px;width:1px;height:14px;background:#cacdd1"></div>
<div class="a" style="left:372px;top:727px;width:1px;height:14px;background:#cacdd1"></div>
<div class="a" style="left:526px;top:727px;width:1px;height:14px;background:#cacdd1"></div>
<svg style="left:800px;top:588px" width="16" height="22"><path d="M2.5 2.5 V18 L6.3 14.4 L9.2 20 L11.6 18.9 L8.8 13.4 L14 13.4Z" fill="#fff" stroke="#111" stroke-width="1.1" stroke-linejoin="round"/></svg>
<div class="a" style="left:0;top:746px;width:1340px;height:1px;background:#e8eaed"></div>
<div class="a" style="left:0;top:747px;width:1340px;height:53px;background:#1a355b"></div>
<svg style="left:19px;top:765px" width="15" height="16"><path d="M2 0.5 H10 L13 3.5 V15.5 H2Z" fill="#f4f4f4"/><rect x="0" y="5" width="15" height="7.5" rx="1" fill="#e3141b"/><text x="7.5" y="11" font-size="6" font-weight="bold" text-anchor="middle" fill="#fff" font-family="Liberation Sans">PDF</text><rect x="2" y="13" width="11" height="1.5" fill="#e3141b"/></svg>
<svg style="left:193px;top:771px" width="11" height="7"><path d="M1 6 L5.5 1.5 L10 6" stroke="#b7c2d2" stroke-width="1.5" fill="none"/></svg>
<div class="a" style="left:220px;top:753px;width:1px;height:40px;background:#3a5274"></div>
<svg style="left:236px;top:765px" width="15" height="16"><path d="M2 0.5 H10 L13 3.5 V15.5 H2Z" fill="#f4f4f4"/><rect x="0" y="5" width="15" height="7.5" rx="1" fill="#e3141b"/><text x="7.5" y="11" font-size="6" font-weight="bold" text-anchor="middle" fill="#fff" font-family="Liberation Sans">PDF</text><rect x="2" y="13" width="11" height="1.5" fill="#e3141b"/></svg>
<svg style="left:410px;top:771px" width="11" height="7"><path d="M1 6 L5.5 1.5 L10 6" stroke="#b7c2d2" stroke-width="1.5" fill="none"/></svg>
<div class="a" style="left:437px;top:753px;width:1px;height:40px;background:#3a5274"></div>
<svg style="left:454px;top:766px" width="12" height="15"><path d="M0.5 0.5 H8 L11.5 4 V14.5 H0.5Z" fill="#f4f6f9"/><rect x="2" y="6" width="8" height="6" fill="#2c7be0"/></svg>
<div class="a" style="left:479px;top:752px;width:382px;height:39px;background:#f1f3f6"></div>
<div class="a" style="left:488px;top:770px;width:2px;height:11px;background:#c4c7cc"></div>
<div class="a" style="left:492px;top:770px;width:2px;height:11px;background:#c4c7cc"></div>
<div class="a" style="left:725px;top:757px;width:94px;height:29px;background:#1a73e8;border-radius:4px"></div>
<div class="a" style="left:870px;top:753px;width:1px;height:40px;background:#3a5274"></div>
<div class="a" style="left:1234px;top:758px;width:73px;height:30px;border:1px solid #a9b6c9;border-radius:4px;background:#223c62"></div>
<svg style="left:1318px;top:768px" width="10" height="10"><path d="M0.8 0.8 L9.2 9.2 M9.2 0.8 L0.8 9.2" stroke="#c3ccd8" stroke-width="1.6"/></svg>
<div class="a" style="left:0;top:800px;width:1340px;height:37px;background:#24272a"></div>
<div class="a" style="left:0;top:800px;width:45px;height:37px;background:#1d2025"></div>
<svg style="left:15px;top:811px" width="15" height="15"><path d="M0 2 L6.5 1.1 V7 H0Z M7.5 1 L15 0 V7 H7.5Z M0 8 H6.5 V13.9 L0 13Z M7.5 8 H15 V15 L7.5 14Z" fill="#fff"/></svg>
<div class="a" style="left:45px;top:800px;width:320px;height:37px;background:#f0f0f0"></div>
<svg style="left:56px;top:811px" width="16" height="15"><circle cx="10" cy="5.5" r="4.8" fill="none" stroke="#222" stroke-width="1.4"/><path d="M6.6 9 L1 14.5" stroke="#222" stroke-width="1.5"/></svg>
<svg style="left:379px;top:810px" width="16" height="16"><circle cx="8" cy="8" r="6.6" fill="none" stroke="#fff" stroke-width="1.8"/></svg>
<svg style="left:423px;top:810px" width="17" height="16"><path d="M1 1 H11 M1 15 H11 M3 4 H10 V12 H3Z M13 4 H15 V15 H13Z" fill="none" stroke="#ddd" stroke-width="1.3"/><circle cx="14" cy="2.5" r="1.3" fill="#ddd"/></svg>
<div class="a" style="left:468px;top:807px;width:22px;height:22px;background:#3a3a3a;border-radius:2px"></div>
<svg style="left:472px;top:810px" width="14" height="16"><path d="M12.5 2.5 L2.5 5.5 L11.5 10 L1.5 13.5" fill="none" stroke="#ff9a10" stroke-width="3.4" stroke-linejoin="miter" stroke-miterlimit="6"/></svg>
<div class="a" style="left:461px;top:834px;width:37px;height:3px;background:#76b9ed"></div>
<svg style="left:514px;top:809px" width="22" height="19"><path d="M0 1 H8 L10 3 H21 V18 H0Z" fill="#e8b830"/><rect x="0" y="5" width="22" height="13" fill="#ffd76a"/><path d="M6 18 V11 H16 V18 H13 V14 H9 V18Z" fill="#2a86d9"/></svg>
<div class="a" style="left:506px;top:834px;width:38px;height:3px;background:#76b9ed"></div>
<svg style="left:559px;top:808px" width="23" height="21"><ellipse cx="11" cy="9" rx="10" ry="7" fill="#e8e8e8" stroke="#c9302c" stroke-width="1.5" transform="rotate(-20 11 9)"/><path d="M3 12 Q8 17 19 10" stroke="#888" stroke-width="2" fill="none"/><circle cx="14" cy="17" r="2.6" fill="none" stroke="#1e8ad6" stroke-width="1.8"/><circle cx="19" cy="16" r="2.6" fill="none" stroke="#1e8ad6" stroke-width="1.8"/><path d="M11 4 L15 15 M15 4 L17 14" stroke="#777" stroke-width="1.2"/></svg>
<div class="a" style="left:594px;top:800px;width:41px;height:37px;background:#484848"></div>
<div class="a" style="left:636px;top:800px;width:1px;height:37px;background:#3a3a3a"></div>
<div class="a" style="left:594px;top:834px;width:43px;height:3px;background:#76b9ed"></div>
<svg style="left:606px;top:807px" width="24" height="22"><circle cx="10" cy="10" r="10" fill="#db4437"/><path d="M10 10 L1.3 5 A10 10 0 0 0 5 18.7Z" fill="#0f9d58"/><path d="M10 10 L5 18.7 A10 10 0 0 0 19.5 13 Z" fill="#f4b400" opacity="0"/><path d="M10 10 L20 10 A10 10 0 0 1 5 18.7Z" fill="#0f9d58"/><path d="M10 10 L18.7 5 A10 10 0 0 1 20 10Z" fill="#f4b400"/><path d="M10 10 L20 10 A10 10 0 0 0 18.7 5Z" fill="#ffcd40"/><circle cx="10" cy="10" r="4.5" fill="#fff"/><circle cx="10" cy="10" r="3.5" fill="#4285f4"/><circle cx="17" cy="16" r="6" fill="#e0e0e0"/><circle cx="17" cy="14" r="2" fill="#555"/><path d="M13.5 19 Q14 16.5 17 16.5 Q20 16.5 20.5 19Z" fill="#555"/></svg>
<div class="a" style="left:651px;top:807px;width:22px;height:22px;background:#bf0000"></div>
<div class="t" style="left:653px;top:810px;font-size:17px;font-weight:bold;font-style:italic;color:#fff;letter-spacing:-1px">Fz</div>
<div class="a" style="left:643px;top:834px;width:37px;height:3px;background:#76b9ed"></div>
<svg style="left:696px;top:807px" width="21" height="21"><path d="M3 1 H17 L20 4 V20 H3Z" fill="#e9f0fa"/><path d="M1 6 H14 V19 H1Z" fill="#d6e4f5"/><text x="8" y="16" font-size="12" font-weight="bold" fill="#1f5cb8" text-anchor="middle" font-family="Liberation Sans">W</text><path d="M13 14 L20 17 L17 20Z" fill="#fff"/></svg>
<div class="a" style="left:731px;top:800px;width:44px;height:37px;background:#a05c22"></div>
<div class="a" style="left:731px;top:834px;width:44px;height:3px;background:#f39c34"></div>
<svg style="left:743px;top:808px" width="21" height="21"><rect width="21" height="21" fill="#ffd800"/><path d="M21 11 V21 H11Z" fill="#222"/><path d="M11 21 L21 11 L13 13Z" fill="#f5b700"/></svg>
<svg style="left:788px;top:807px" width="24" height="22"><circle cx="10" cy="10" r="10" fill="#db4437"/><path d="M10 10 L1.3 5 A10 10 0 0 0 5 18.7Z" fill="#0f9d58"/><path d="M10 10 L5 18.7 A10 10 0 0 0 19.5 13 Z" fill="#f4b400" opacity="0"/><path d="M10 10 L20 10 A10 10 0 0 1 5 18.7Z" fill="#0f9d58"/><path d="M10 10 L18.7 5 A10 10 0 0 1 20 10Z" fill="#f4b400"/><path d="M10 10 L20 10 A10 10 0 0 0 18.7 5Z" fill="#ffcd40"/><circle cx="10" cy="10" r="4.5" fill="#fff"/><circle cx="10" cy="10" r="3.5" fill="#4285f4"/><circle cx="17" cy="16" r="6" fill="#1e2a33"/><circle cx="17" cy="14" r="2" fill="#fff"/><path d="M13.5 19 Q14 16.5 17 16.5 Q20 16.5 20.5 19Z" fill="#fff"/></svg>
<div class="a" style="left:780px;top:834px;width:38px;height:3px;background:#76b9ed"></div>
<svg style="left:1055px;top:809px" width="19" height="19"><defs><linearGradient id="sun" x1="0" y1="0" x2="0" y2="1"><stop offset="0" stop-color="#ffd84a"/><stop offset="1" stop-color="#f5a400"/></linearGradient></defs><circle cx="9.5" cy="9.5" r="8.8" fill="url(#sun)"/></svg>
<svg style="left:1169px;top:813px" width="13" height="9"><path d="M1 8 L6.5 2 L12 8" stroke="#ddd" stroke-width="1.4" fill="none"/></svg>
<svg style="left:1189px;top:811px" width="17" height="15"><rect x="2.6" y="2.6" width="13.8" height="8.8" fill="none" stroke="#ddd" stroke-width="1.2"/><path d="M9.5 11.5 V14 M5.5 14.4 H13.5" stroke="#ddd" stroke-width="1.2"/><rect x="0.5" y="0.5" width="5" height="5" fill="#24272a" stroke="#ddd" stroke-width="1"/></svg>
<svg style="left:1212px;top:811px" width="17" height="15"><path d="M1 5 H4 L8 1.5 V13.5 L4 10 H1Z" fill="none" stroke="#ddd" stroke-width="1.2"/><path d="M10.5 5 Q12 7.5 10.5 10 M12.8 3 Q15.5 7.5 12.8 12 M14.8 1.5 Q18.5 7.5 14.8 13.5" stroke="#ddd" stroke-width="1.1" fill="none"/></svg>
<svg style="left:1301px;top:810px" width="24" height="22"><path d="M1 1 H16 V11 H7 L4 14 V11 H1Z" fill="none" stroke="#ddd" stroke-width="1.2"/><path d="M4 4 H13 M4 6.5 H13 M4 9 H10" stroke="#ddd" stroke-width="1.1"/><circle cx="15.5" cy="14.5" r="6.2" fill="#24272a" stroke="#ddd" stroke-width="1.2"/><text x="15.5" y="18.5" font-size="10.5" font-weight="bold" text-anchor="middle" fill="#eee" font-family="Liberation Sans">2</text></svg>
<div class="a" style="left:1337px;top:800px;width:1px;height:37px;background:#5a5a5a"></div>
<svg style="left:0;top:0" width="1340" height="837" font-family="Liberation Sans"><text x="132.3" y="52.7" font-size="13.2" fill="#fff" textLength="115.5" lengthAdjust="spacingAndGlyphs" >srilance.softileo.com</text><text x="248" y="52.7" font-size="13.2" fill="#a4a8ad" textLength="149.7" lengthAdjust="spacingAndGlyphs" >/hourly-contract-detail/26</text><text x="471" y="102.5" font-size="14.5" fill="#7b7b7b" textLength="46" lengthAdjust="spacingAndGlyphs" >Search</text><text x="709" y="99.8" font-size="14.3" fill="#333" textLength="68" lengthAdjust="spacingAndGlyphs" >Find Work</text><text x="801" y="99.8" font-size="14.3" fill="#333" textLength="75" lengthAdjust="spacingAndGlyphs" >My Reports</text><text x="899" y="99.8" font-size="14.3" fill="#333" textLength="66" lengthAdjust="spacingAndGlyphs" >Messages</text><text x="1076" y="99.8" font-size="14.3" fill="#333" textLength="65" lengthAdjust="spacingAndGlyphs" >demouser</text><text x="988" y="101" font-size="18" fill="#111" textLength="11" lengthAdjust="spacingAndGlyphs" font-weight="bold" >?</text><text x="1035.5" y="90.5" font-size="11" fill="#fff" textLength="7" lengthAdjust="spacingAndGlyphs" >0</text><text x="418.5" y="172.3" font-size="23.5" fill="#222" textLength="181" lengthAdjust="spacingAndGlyphs" >Figma site design</text><text x="418.5" y="202.7" font-size="14.8" fill="#2b2b2b" textLength="43" lengthAdjust="spacingAndGlyphs" font-weight="bold" >Tester</text><text x="418.3" y="255.6" font-size="13.8" fill="#444" textLength="67" lengthAdjust="spacingAndGlyphs" >00: 00: 39</text><text x="423.4" y="278" font-size="14.2" fill="#5a5a5a" textLength="107" lengthAdjust="spacingAndGlyphs" >Today (Sat UTC)</text><text x="767.2" y="298.5" font-size="14.4" fill="#333" textLength="110" lengthAdjust="spacingAndGlyphs" >This Week (UTC)</text><text x="767.2" y="340" font-size="21.2" fill="#333" textLength="138" lengthAdjust="spacingAndGlyphs" >0:00 of 30 hrs</text><text x="431" y="403.7" font-size="18.8" fill="#333" textLength="209" lengthAdjust="spacingAndGlyphs" >What are you woring on?</text><text x="75" y="451.5" font-size="12" fill="#5f6368" textLength="44" lengthAdjust="spacingAndGlyphs" >Elements</text><text x="140" y="451.5" font-size="12" fill="#5f6368" textLength="41" lengthAdjust="spacingAndGlyphs" >Console</text><text x="202" y="451.5" font-size="12" fill="#5f6368" textLength="39" lengthAdjust="spacingAndGlyphs" >Sources</text><text x="263" y="451.5" font-size="12" fill="#333" textLength="42" lengthAdjust="spacingAndGlyphs" >Network</text><text x="327" y="451.5" font-size="12" fill="#5f6368" textLength="62" lengthAdjust="spacingAndGlyphs" >Performance</text><text x="411" y="451.5" font-size="12" fill="#5f6368" textLength="41" lengthAdjust="spacingAndGlyphs" >Memory</text><text x="474" y="451.5" font-size="12" fill="#5f6368" textLength="56" lengthAdjust="spacingAndGlyphs" >Application</text><text x="552" y="451.5" font-size="12" fill="#5f6368" textLength="39" lengthAdjust="spacingAndGlyphs" >Security</text><text x="622" y="451.5" font-size="12" fill="#5f6368" textLength="55" lengthAdjust="spacingAndGlyphs" >Lighthouse</text><text x="698" y="451.5" font-size="12" fill="#5f6368" textLength="41" lengthAdjust="spacingAndGlyphs" >AdBlock</text><text x="1204" y="451.5" font-size="12" fill="#5f6368" >1</text><text x="1238" y="451.5" font-size="12" fill="#5f6368" >1</text><text x="146" y="476" font-size="12" fill="#5f6368" textLength="59" lengthAdjust="spacingAndGlyphs" >Preserve log</text><text x="241" y="476" font-size="12" fill="#303942" textLength="67" lengthAdjust="spacingAndGlyphs" >Disable cache</text><text x="319" y="476" font-size="12" fill="#5f6368" textLength="63" lengthAdjust="spacingAndGlyphs" >No throttling</text><text x="7" y="500" font-size="12" fill="#80868b" textLength="26" lengthAdjust="spacingAndGlyphs" >Filter</text><text x="184" y="500" font-size="12" fill="#5f6368" textLength="28" lengthAdjust="spacingAndGlyphs" >Invert</text><text x="238" y="500" font-size="12" fill="#5f6368" textLength="75" lengthAdjust="spacingAndGlyphs" >Hide data URLs</text><text x="321" y="501" font-size="12" fill="#333" textLength="14" lengthAdjust="spacingAndGlyphs" >All</text><text x="349" y="501" font-size="12" fill="#303942" textLength="52" lengthAdjust="spacingAndGlyphs" >Fetch/XHR</text><text x="410" y="501" font-size="12" fill="#303942" textLength="10" lengthAdjust="spacingAndGlyphs" >JS</text><text x="429" y="501" font-size="12" fill="#303942" textLength="19" lengthAdjust="spacingAndGlyphs" >CSS</text><text x="457" y="501" font-size="12" fill="#303942" textLength="19" lengthAdjust="spacingAndGlyphs" >Img</text><text x="486" y="501" font-size="12" fill="#303942" textLength="30" lengthAdjust="spacingAndGlyphs" >Media</text><text x="526" y="501" font-size="12" fill="#303942" textLength="22" lengthAdjust="spacingAndGlyphs" >Font</text><text x="557" y="501" font-size="12" fill="#303942" textLength="19" lengthAdjust="spacingAndGlyphs" >Doc</text><text x="586" y="501" font-size="12" fill="#303942" textLength="16" lengthAdjust="spacingAndGlyphs" >WS</text><text x="612" y="501" font-size="12" fill="#303942" textLength="30" lengthAdjust="spacingAndGlyphs" >Wasm</text><text x="651" y="501" font-size="12" fill="#303942" textLength="43" lengthAdjust="spacingAndGlyphs" >Manifest</text><text x="703" y="501" font-size="12" fill="#303942" textLength="29" lengthAdjust="spacingAndGlyphs" >Other</text><text x="763" y="501" font-size="12" fill="#5f6368" textLength="99" lengthAdjust="spacingAndGlyphs" >Has blocked cookies</text><text x="889" y="501" font-size="12" fill="#5f6368" textLength="85" lengthAdjust="spacingAndGlyphs" >Blocked Requests</text><text x="1001" y="501" font-size="12" fill="#5f6368" textLength="91" lengthAdjust="spacingAndGlyphs" >3rd-party requests</text><text x="117" y="521.5" font-size="10.3" fill="#303942" textLength="33" lengthAdjust="spacingAndGlyphs" text-anchor="end" >5000 ms</text><text x="237" y="521.5" font-size="10.3" fill="#303942" textLength="38.5" lengthAdjust="spacingAndGlyphs" text-anchor="end" >10000 ms</text><text x="356" y="521.5" font-size="10.3" fill="#303942" textLength="38.5" lengthAdjust="spacingAndGlyphs" text-anchor="end" >15000 ms</text><text x="476" y="521.5" font-size="10.3" fill="#303942" textLength="38.5" lengthAdjust="spacingAndGlyphs" text-anchor="end" >20000 ms</text><text x="595" y="521.5" font-size="10.3" fill="#303942" textLength="38.5" lengthAdjust="spacingAndGlyphs" text-anchor="end" >25000 ms</text><text x="715" y="521.5" font-size="10.3" fill="#303942" textLength="38.5" lengthAdjust="spacingAndGlyphs" text-anchor="end" >30000 ms</text><text x="834" y="521.5" font-size="10.3" fill="#303942" textLength="38.5" lengthAdjust="spacingAndGlyphs" text-anchor="end" >35000 ms</text><text x="954" y="521.5" font-size="10.3" fill="#303942" textLength="38.5" lengthAdjust="spacingAndGlyphs" text-anchor="end" >40000 ms</text><text x="1073" y="521.5" font-size="10.3" fill="#303942" textLength="38.5" lengthAdjust="spacingAndGlyphs" text-anchor="end" >45000 ms</text><text x="1193" y="521.5" font-size="10.3" fill="#303942" textLength="38.5" lengthAdjust="spacingAndGlyphs" text-anchor="end" >50000 ms</text><text x="1312" y="521.5" font-size="10.3" fill="#303942" textLength="38.5" lengthAdjust="spacingAndGlyphs" text-anchor="end" >55000 ms</text><text x="5" y="601" font-size="12" fill="#303942" textLength="29" lengthAdjust="spacingAndGlyphs" >Name</text><text x="432" y="601" font-size="12" fill="#303942" textLength="30" lengthAdjust="spacingAndGlyphs" >Status</text><text x="560" y="601" font-size="12" fill="#303942" textLength="23" lengthAdjust="spacingAndGlyphs" >Type</text><text x="688" y="601" font-size="12" fill="#303942" textLength="39" lengthAdjust="spacingAndGlyphs" >Initiator</text><text x="902" y="601" font-size="12" fill="#303942" textLength="21" lengthAdjust="spacingAndGlyphs" >Size</text><text x="1030" y="601" font-size="12" fill="#303942" textLength="24" lengthAdjust="spacingAndGlyphs" >Time</text><text x="1158" y="601" font-size="12" fill="#303942" textLength="43" lengthAdjust="spacingAndGlyphs" >Waterfall</text><text x="24" y="619" font-size="12" fill="#303030" textLength="54" lengthAdjust="spacingAndGlyphs" >hourly.php</text><text x="432" y="619" font-size="12" fill="#303942" textLength="18" lengthAdjust="spacingAndGlyphs" >200</text><text x="560" y="619" font-size="12" fill="#303030" textLength="15" lengthAdjust="spacingAndGlyphs" >xhr</text><text x="688" y="619" font-size="12" fill="#333" textLength="70" lengthAdjust="spacingAndGlyphs" >jquery.min.js:2</text><text x="1021" y="619" font-size="12" fill="#303942" textLength="27" lengthAdjust="spacingAndGlyphs" text-anchor="end" >124 B</text><text x="1149" y="619" font-size="12" fill="#303942" textLength="28" lengthAdjust="spacingAndGlyphs" text-anchor="end" >2.01 s</text><text x="24" y="638.5" font-size="12" fill="#303030" textLength="54" lengthAdjust="spacingAndGlyphs" >hourly.php</text><text x="432" y="638.5" font-size="12" fill="#303942" textLength="18" lengthAdjust="spacingAndGlyphs" >200</text><text x="560" y="638.5" font-size="12" fill="#303030" textLength="15" lengthAdjust="spacingAndGlyphs" >xhr</text><text x="688" y="638.5" font-size="12" fill="#333" textLength="70" lengthAdjust="spacingAndGlyphs" >jquery.min.js:2</text><text x="1021" y="638.5" font-size="12" fill="#303942" textLength="27" lengthAdjust="spacingAndGlyphs" text-anchor="end" >214 B</text><text x="1149" y="638.5" font-size="12" fill="#303942" textLength="28" lengthAdjust="spacingAndGlyphs" text-anchor="end" >2.56 s</text><text x="24" y="658" font-size="12" fill="#303030" textLength="54" lengthAdjust="spacingAndGlyphs" >hourly.php</text><text x="432" y="658" font-size="12" fill="#303942" textLength="18" lengthAdjust="spacingAndGlyphs" >200</text><text x="560" y="658" font-size="12" fill="#303030" textLength="15" lengthAdjust="spacingAndGlyphs" >xhr</text><text x="688" y="658" font-size="12" fill="#333" textLength="70" lengthAdjust="spacingAndGlyphs" >jquery.min.js:2</text><text x="1021" y="658" font-size="12" fill="#303942" textLength="27" lengthAdjust="spacingAndGlyphs" text-anchor="end" >124 B</text><text x="1149" y="658" font-size="12" fill="#303942" textLength="28" lengthAdjust="spacingAndGlyphs" text-anchor="end" >2.42 s</text><text x="24" y="677.5" font-size="12" fill="#303030" textLength="54" lengthAdjust="spacingAndGlyphs" >hourly.php</text><text x="432" y="677.5" font-size="12" fill="#303942" textLength="18" lengthAdjust="spacingAndGlyphs" >200</text><text x="560" y="677.5" font-size="12" fill="#303030" textLength="15" lengthAdjust="spacingAndGlyphs" >xhr</text><text x="688" y="677.5" font-size="12" fill="#333" textLength="70" lengthAdjust="spacingAndGlyphs" >jquery.min.js:2</text><text x="1021" y="677.5" font-size="12" fill="#303942" textLength="27" lengthAdjust="spacingAndGlyphs" text-anchor="end" >214 B</text><text x="1149" y="677.5" font-size="12" fill="#303942" textLength="28" lengthAdjust="spacingAndGlyphs" text-anchor="end" >2.55 s</text><text x="24" y="697" font-size="12" fill="#303030" textLength="54" lengthAdjust="spacingAndGlyphs" >hourly.php</text><text x="432" y="697" font-size="12" fill="#303942" textLength="18" lengthAdjust="spacingAndGlyphs" >200</text><text x="560" y="697" font-size="12" fill="#303030" textLength="15" lengthAdjust="spacingAndGlyphs" >xhr</text><text x="688" y="697" font-size="12" fill="#333" textLength="70" lengthAdjust="spacingAndGlyphs" >jquery.min.js:2</text><text x="1021" y="697" font-size="12" fill="#303942" textLength="27" lengthAdjust="spacingAndGlyphs" text-anchor="end" >124 B</text><text x="1149" y="697" font-size="12" fill="#303942" textLength="28" lengthAdjust="spacingAndGlyphs" text-anchor="end" >2.46 s</text><text x="24" y="716.5" font-size="12" fill="#303030" textLength="54" lengthAdjust="spacingAndGlyphs" >hourly.php</text><text x="432" y="716.5" font-size="12" fill="#5f6368" textLength="47" lengthAdjust="spacingAndGlyphs" >(pending)</text><text x="560" y="716.5" font-size="12" fill="#303030" textLength="15" lengthAdjust="spacingAndGlyphs" >xhr</text><text x="688" y="716.5" font-size="12" fill="#333" textLength="70" lengthAdjust="spacingAndGlyphs" >jquery.min.js:2</text><text x="1021" y="716.5" font-size="12" fill="#303942" textLength="18" lengthAdjust="spacingAndGlyphs" text-anchor="end" >0 B</text><text x="1149" y="716.5" font-size="12" fill="#5f6368" textLength="40" lengthAdjust="spacingAndGlyphs" text-anchor="end" >Pending</text><text x="10" y="739" font-size="12" fill="#5f6368" textLength="57" lengthAdjust="spacingAndGlyphs" >47 requests</text><text x="85" y="739" font-size="12" fill="#5f6368" textLength="91" lengthAdjust="spacingAndGlyphs" >2.5 MB transferred</text><text x="193" y="739" font-size="12" fill="#5f6368" textLength="84" lengthAdjust="spacingAndGlyphs" >3.7 MB resources</text><text x="295" y="739" font-size="12" fill="#5f6368" textLength="68" lengthAdjust="spacingAndGlyphs" >Finish: 49.64 s</text><text x="381" y="739" font-size="12" fill="#1a73e8" textLength="135" lengthAdjust="spacingAndGlyphs" >DOMContentLoaded: 9.29 s</text><text x="535" y="739" font-size="12" fill="#c5221f" textLength="57" lengthAdjust="spacingAndGlyphs" >Load: 9.43 s</text><text x="46" y="779" font-size="13" fill="#e8ecf2" textLength="125" lengthAdjust="spacingAndGlyphs" >Individual ( Consu....pdf</text><text x="262" y="779" font-size="13" fill="#e8ecf2" textLength="125" lengthAdjust="spacingAndGlyphs" >Individual ( Consu....pdf</text><text x="503" y="776" font-size="13" fill="#333" textLength="212" lengthAdjust="spacingAndGlyphs" >srilance.softileo.com is sharing your screen.</text><text x="740" y="776" font-size="13" fill="#fff" textLength="63" lengthAdjust="spacingAndGlyphs" font-weight="bold" >Stop sharing</text><text x="828" y="776" font-size="13" fill="#1a73e8" textLength="23" lengthAdjust="spacingAndGlyphs" >Hide</text><text x="1249" y="777" font-size="13" fill="#fff" textLength="42" lengthAdjust="spacingAndGlyphs" font-weight="bold" >Show all</text><text x="82" y="824" font-size="15" fill="#3a3a3a" textLength="119" lengthAdjust="spacingAndGlyphs" >Type here to search</text><text x="1084" y="824" font-size="13.5" fill="#e6e6e6" textLength="26" lengthAdjust="spacingAndGlyphs" >32°C</text><text x="1119" y="824" font-size="13.5" fill="#e6e6e6" textLength="35" lengthAdjust="spacingAndGlyphs" >Sunny</text><text x="1241" y="814" font-size="13" fill="#e6e6e6" textLength="40" lengthAdjust="spacingAndGlyphs" >5:52 PM</text><text x="1238" y="831" font-size="13" fill="#e6e6e6" textLength="47" lengthAdjust="spacingAndGlyphs" >10/9/2021</text></svg>
</body></html>
